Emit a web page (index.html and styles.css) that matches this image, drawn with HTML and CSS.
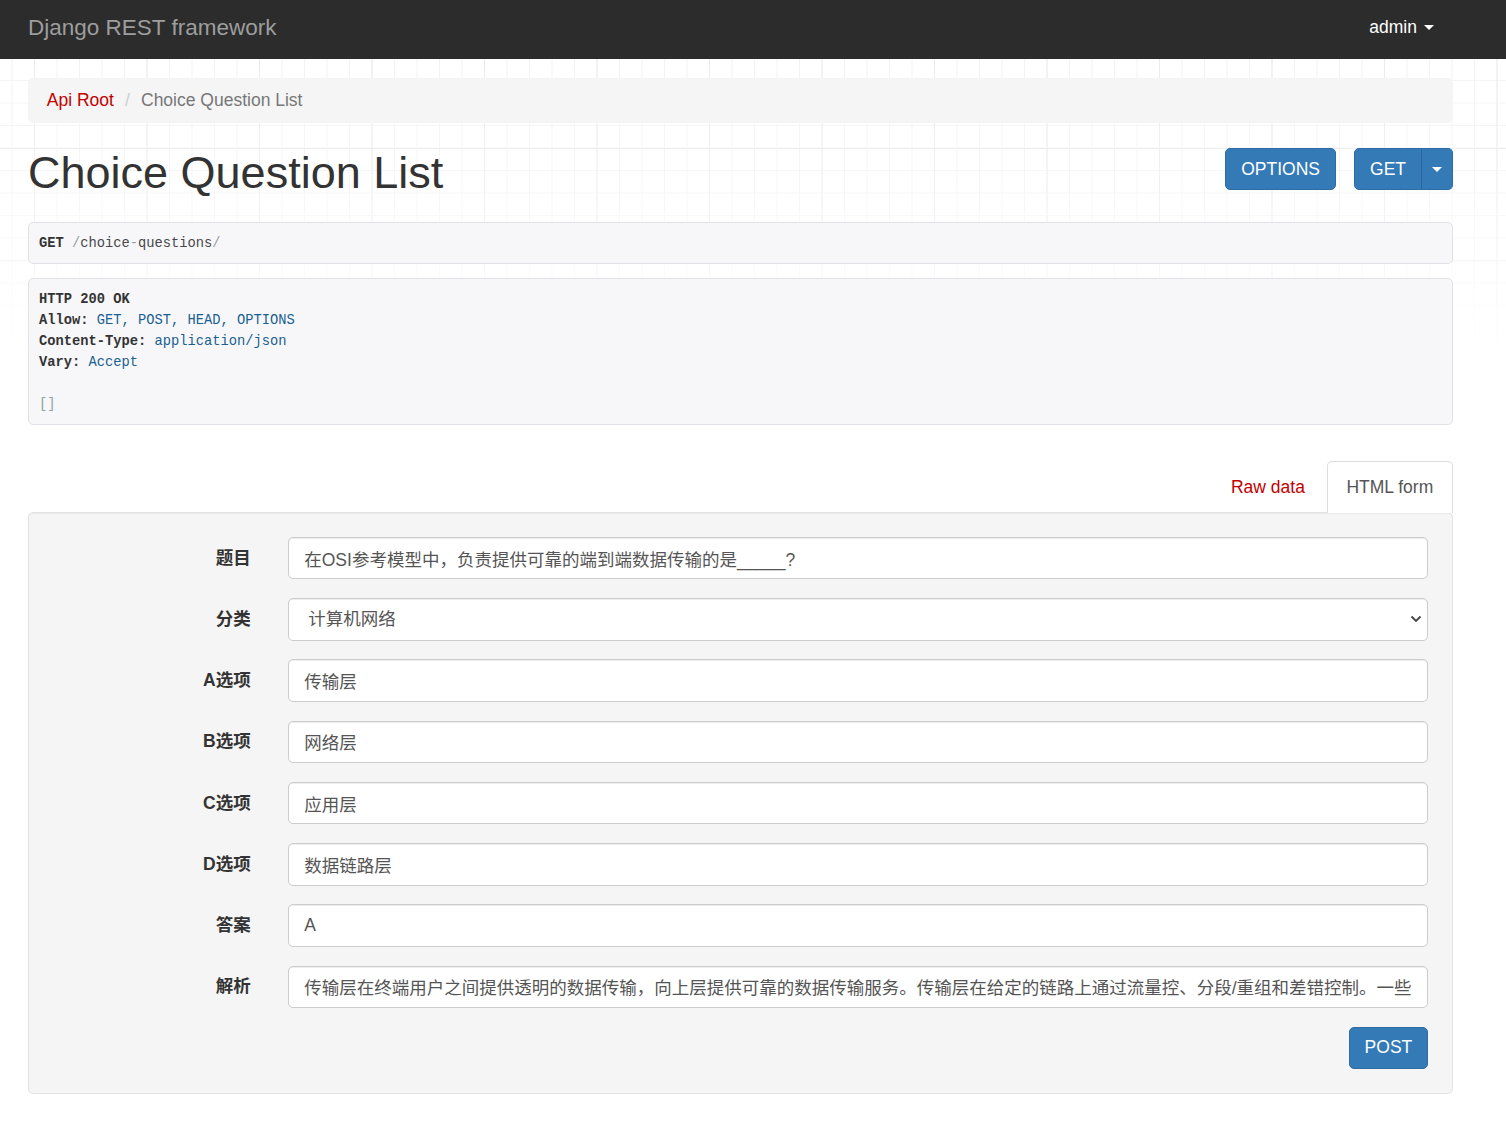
FILE: index.html
```html
<!DOCTYPE html>
<html lang="zh-CN">
<head>
<meta charset="utf-8">
<title>Choice Question List – Django REST framework</title>
<link rel="stylesheet" href="styles.css">
</head>
<body>
<header class="navbar">
  <a class="brand" href="#">Django REST framework</a>
  <a class="user" href="#">admin <span class="caret"></span></a>
</header>

<main class="container">
  <nav class="breadcrumb">
    <a href="#">Api Root</a><span class="sep">/&nbsp;</span><span class="active">Choice Question List</span>
  </nav>

  <div class="page-head">
    <h1>Choice Question List</h1>
    <div class="actions">
      <button class="btn" type="button">OPTIONS</button>
      <div class="btn-group">
        <button class="btn" type="button">GET</button><button class="btn caret-btn" type="button"><span class="caret"></span></button>
      </div>
    </div>
  </div>

  <pre class="pp request"><b>GET</b> <span class="pun">/</span><span class="pln">choice</span><span class="pun">-</span><span class="pln">questions</span><span class="pun">/</span></pre>

  <pre class="pp response"><b>HTTP 200 OK</b>
<b>Allow:</b> <span class="lit">GET, POST, HEAD, OPTIONS</span>
<b>Content-Type:</b> <span class="lit">application/json</span>
<b>Vary:</b> <span class="lit">Accept</span>

<span class="pun">[]</span></pre>

  <div class="tabs">
    <a class="tab" href="#">Raw data</a>
    <a class="tab active" href="#">HTML form</a>
  </div>

  <form class="well">
    <div class="form-group">
      <label class="label">题目</label>
      <input class="input" type="text" value="在OSI参考模型中，负责提供可靠的端到端数据传输的是_____?">
    </div>
    <div class="form-group">
      <label class="label">分类</label>
      <div class="select-wrap">
        <select class="input select"><option>计算机网络</option></select>
        <svg class="chev" width="12" height="8" viewBox="0 0 12 8"><path d="M1.5 1.5 L6 6 L10.5 1.5" fill="none" stroke="#444" stroke-width="1.8"/></svg>
      </div>
    </div>
    <div class="form-group">
      <label class="label">A选项</label>
      <input class="input" type="text" value="传输层">
    </div>
    <div class="form-group">
      <label class="label">B选项</label>
      <input class="input" type="text" value="网络层">
    </div>
    <div class="form-group">
      <label class="label">C选项</label>
      <input class="input" type="text" value="应用层">
    </div>
    <div class="form-group">
      <label class="label">D选项</label>
      <input class="input" type="text" value="数据链路层">
    </div>
    <div class="form-group">
      <label class="label">答案</label>
      <input class="input" type="text" value="A">
    </div>
    <div class="form-group">
      <label class="label">解析</label>
      <input class="input" type="text" value="传输层在终端用户之间提供透明的数据传输，向上层提供可靠的数据传输服务。传输层在给定的链路上通过流量控、分段/重组和差错控制。一些">
    </div>
    <div class="form-actions">
      <button class="btn" type="button">POST</button>
    </div>
  </form>
</main>
</body>
</html>
```

FILE: styles.css
```css
html, body {
  margin: 0;
  padding: 0;
}

body {
  font-family: "Liberation Sans", Arial, "Noto Sans CJK SC", sans-serif;
  font-size: 17.5px;
  line-height: 25px;
  color: #333;
  background: #fff;
  padding-bottom: 40px;
}

body::before {
  content: "";
  position: absolute;
  left: 0;
  right: 0;
  top: 59px;
  height: 300px;
  z-index: -1;
  background-image:
    linear-gradient(to right, #ebebeb 1px, transparent 1px),
    linear-gradient(to bottom, #ebebeb 1px, transparent 1px),
    linear-gradient(to right, #f3f3f3 1px, transparent 1px),
    linear-gradient(to bottom, #f3f3f3 1px, transparent 1px);
  background-size: 112.5px 100%, 100% 112.5px, 22.5px 100%, 100% 22.5px;
  background-position: 34px 0, 0 89px, 11.5px 0, 0 21px;
  -webkit-mask-image: linear-gradient(to bottom, #000 0, rgba(0,0,0,0.7) 45%, transparent 100%);
  mask-image: linear-gradient(to bottom, #000 0, rgba(0,0,0,0.7) 45%, transparent 100%);
}

a { text-decoration: none; }

/* navbar */
.navbar {
  height: 59px;
  box-sizing: border-box;
  padding: 0 53px 5px 28px;
  background: #2c2c2c;
  display: flex;
  align-items: center;
  justify-content: space-between;
}

.brand {
  color: #9d9d9d;
  font-size: 22.5px;
  line-height: 25px;
}

.user {
  color: #fff;
  font-size: 17.5px;
  line-height: 25px;
  padding-right: 18.75px;
}

.caret {
  display: inline-block;
  width: 0;
  height: 0;
  margin-left: 2.5px;
  vertical-align: middle;
  border-top: 5px solid;
  border-left: 5px solid transparent;
  border-right: 5px solid transparent;
}

/* container */
.container {
  margin-left: 28px;
  width: 1425px;
}

.breadcrumb {
  margin-top: 19px;
  margin-bottom: 25px;
  padding: 10px 18.75px;
  background: #f5f5f5;
  border-radius: 5px;
  line-height: 25px;
}

.breadcrumb a { color: #c20000; }

.sep {
  color: #ccc;
  margin-left: 4.9px;
  padding: 0 6.25px;
}

.active { color: #777; }

.page-head {
  display: flex;
  justify-content: space-between;
  align-items: flex-start;
}

h1 {
  margin: 0;
  font-size: 45px;
  font-weight: normal;
  line-height: 49.5px;
  color: #333;
}

.actions {
  display: flex;
  gap: 18px;
}

.btn {
  font-family: "Liberation Sans", Arial, sans-serif;
  font-size: 17.5px;
  line-height: 25px;
  padding: 7.5px 15px;
  color: #fff;
  background: #337ab7;
  border: 1px solid #2e6da4;
  border-radius: 5px;
  margin: 0;
  cursor: pointer;
}

.btn-group {
  display: flex;
}

.btn-group .btn:first-child {
  border-top-right-radius: 0;
  border-bottom-right-radius: 0;
}

.caret-btn {
  padding: 7.5px 10px;
  margin-left: -1px;
  border-top-left-radius: 0;
  border-bottom-left-radius: 0;
  border-left-color: #2a65a0;
  display: flex;
  align-items: center;
}

.caret-btn .caret { margin-left: 0; color: #fff; }

/* pre blocks */
.pp {
  font-family: "Liberation Mono", "DejaVu Sans Mono", monospace;
  font-size: 13.75px;
  line-height: 21px;
  color: #333;
  background: #f7f7f9;
  border: 1px solid #e1e1e8;
  border-radius: 5px;
  padding: 9.5px 10px;
  margin: 0;
  white-space: pre;
}

.pp b { font-weight: bold; color: #333; }
.pun { color: #93a1a1; }
.pln { color: #48484c; }
.lit { color: #195f91; }

.request { margin-top: 24.5px; }
.response { margin-top: 14px; }

/* tabs */
.tabs {
  margin-top: 36px;
  display: flex;
  justify-content: flex-end;
  gap: 2px;
  margin-bottom: -1px;
  position: relative;
  z-index: 1;
}

.tab {
  display: block;
  padding: 12.5px 18.75px;
  line-height: 25px;
  border: 1px solid transparent;
  border-bottom: 0;
  border-radius: 5px 5px 0 0;
  color: #c20000;
}

.tab.active {
  color: #555;
  background: #fff;
  border-color: #ddd;
  padding-bottom: 13.5px;
}

/* form */
.well {
  margin: 0;
  background: #f5f5f5;
  border: 1px solid #e3e3e3;
  border-radius: 5px;
  padding: 23.75px;
  box-shadow: inset 0 1px 1px rgba(0,0,0,0.05);
}

.form-group {
  display: grid;
  grid-template-columns: 198px 1fr;
  column-gap: 37.5px;
  margin-bottom: 18.75px;
}

.label {
  text-align: right;
  font-weight: bold;
  padding-top: 8.75px;
  line-height: 25px;
  color: #333;
}

.input {
  display: block;
  width: 100%;
  box-sizing: border-box;
  height: 42.5px;
  padding: 7.5px 12px 7.5px 15px;
  font-family: "Liberation Sans", Arial, "Noto Sans CJK SC", sans-serif;
  font-size: 17.5px;
  line-height: 25px;
  color: #555;
  background: #fff;
  border: 1px solid #ccc;
  border-radius: 5px;
  box-shadow: inset 0 1px 1px rgba(0,0,0,0.075);
  margin: 0;
}

.select-wrap {
  position: relative;
}

.select {
  -webkit-appearance: none;
  appearance: none;
  padding-left: 19px;
}

.chev {
  position: absolute;
  right: 6px;
  top: 17px;
  pointer-events: none;
}

.form-actions {
  display: flex;
  justify-content: flex-end;
}
```
